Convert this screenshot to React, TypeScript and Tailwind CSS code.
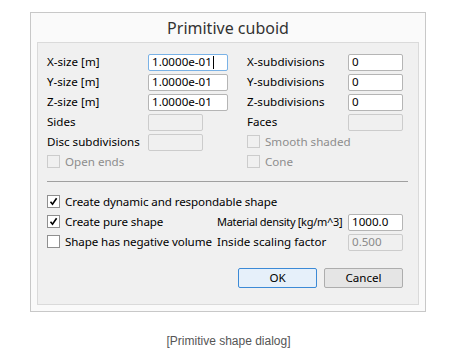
import React from 'react'

const FONT = { fontFamily: '"Noto Sans", "Open Sans", sans-serif' }

function Check({ checked, disabled }: { checked?: boolean; disabled?: boolean }) {
  return (
    <span
      className={
        'flex h-[13px] w-[13px] shrink-0 items-center justify-center border ' +
        (disabled ? 'border-[#cccccc] bg-[#f0f0f0]' : 'border-[#8f8f8f] bg-white')
      }
    >
      {checked && (
        <svg width="9" height="9" viewBox="0 0 9 9">
          <path d="M1.5 4.8 L3.5 7.2 L7.6 1.2" fill="none" stroke="#000" strokeWidth="1.6" />
        </svg>
      )}
    </span>
  )
}

function Field({
  value,
  w = 'w-[55px]',
  focused,
  disabled,
}: {
  value?: string
  w?: string
  focused?: boolean
  disabled?: boolean
}) {
  return (
    <div
      className={
        'flex h-[17px] shrink-0 items-center rounded-[2px] border px-[3px] text-[11.6px] leading-none ' +
        w +
        ' ' +
        (focused
          ? 'border-[#7ab2e6] bg-white text-black'
          : disabled
            ? 'border-[#cccccc] bg-[#f0f0f0] text-[#8a8a8a]'
            : 'border-[#b5b5b5] bg-white text-black')
      }
    >
      {value}
      {focused && <span className="ml-px h-[13px] w-px bg-black" />}
    </div>
  )
}

function Row({ children }: { children: React.ReactNode }) {
  return <div className="flex h-[20px] items-center whitespace-nowrap">{children}</div>
}

function Label({ text, w, muted }: { text: string; w: string; muted?: boolean }) {
  return <span className={'shrink-0 ' + w + ' ' + (muted ? 'text-[#8d8d8d]' : 'text-black')}>{text}</span>
}

function CheckLabel({ text, checked, disabled }: { text: string; checked?: boolean; disabled?: boolean }) {
  return (
    <div className="flex items-center gap-[5px] whitespace-nowrap">
      <Check checked={checked} disabled={disabled} />
      <span className={disabled ? 'text-[#8d8d8d]' : 'text-black'}>{text}</span>
    </div>
  )
}

export default function App() {
  return (
    <div className="h-[352px] w-[457px] bg-white pt-[12px] pl-[30px]" style={FONT}>
      {/* screenshot frame */}
      <div className="flex h-[300px] w-[396px] flex-col border border-[#c8c8c8] bg-[#fafafa] px-[6px] pb-[6px]">
        <div className="flex h-[29px] items-center justify-center pt-px text-[16px] text-[#333333]">
          Primitive cuboid
        </div>

        {/* dialog body */}
        <div className="flex-1 border border-[#dadada] bg-[#f0f0f0] pt-[9px] pl-[9px] text-[11.6px]">
          <div className="flex">
            <div className="w-[200px] shrink-0">
              <Row>
                <Label text="X-size [m]" w="w-[101px]" />
                <Field value="1.0000e-01" w="w-[80px]" focused />
              </Row>
              <Row>
                <Label text="Y-size [m]" w="w-[101px]" />
                <Field value="1.0000e-01" w="w-[80px]" />
              </Row>
              <Row>
                <Label text="Z-size [m]" w="w-[101px]" />
                <Field value="1.0000e-01" w="w-[80px]" />
              </Row>
              <Row>
                <Label text="Sides" w="w-[101px]" />
                <Field disabled />
              </Row>
              <Row>
                <Label text="Disc subdivisions" w="w-[101px]" />
                <Field disabled />
              </Row>
              <Row>
                <CheckLabel text="Open ends" disabled />
              </Row>
            </div>
            <div className="w-[160px] shrink-0">
              <Row>
                <Label text="X-subdivisions" w="w-[101px]" />
                <Field value="0" />
              </Row>
              <Row>
                <Label text="Y-subdivisions" w="w-[101px]" />
                <Field value="0" />
              </Row>
              <Row>
                <Label text="Z-subdivisions" w="w-[101px]" />
                <Field value="0" />
              </Row>
              <Row>
                <Label text="Faces" w="w-[101px]" />
                <Field disabled />
              </Row>
              <Row>
                <CheckLabel text="Smooth shaded" disabled />
              </Row>
              <Row>
                <CheckLabel text="Cone" disabled />
              </Row>
            </div>
          </div>

          <div className="mt-[9px] mb-[10px] h-px w-[361px] bg-[#a0a0a0]" />

          <div className="flex">
            <div className="w-[170px] shrink-0 tracking-[-0.1px]">
              <Row>
                <CheckLabel text="Create dynamic and respondable shape" checked />
              </Row>
              <Row>
                <CheckLabel text="Create pure shape" checked />
              </Row>
              <Row>
                <CheckLabel text="Shape has negative volume" />
              </Row>
            </div>
            <div className="w-[190px] shrink-0">
              <Row>
                <span />
              </Row>
              <Row>
                <Label text="Material density [kg/m^3]" w="w-[131px] text-[11px] tracking-[-0.3px]" />
                <Field value="1000.0" />
              </Row>
              <Row>
                <Label text="Inside scaling factor" w="w-[131px]" />
                <Field value="0.500" disabled />
              </Row>
            </div>
          </div>

          <div className="mt-[16px] flex gap-[7px] pl-[191px]">
            <button className="h-[20px] w-[79px] rounded-[2px] border border-[#3c8ad6] bg-[#e6f0fa] text-[11.6px] text-black">
              OK
            </button>
            <button className="h-[20px] w-[79px] rounded-[2px] border border-[#adadad] bg-[#e5e5e5] text-[11.6px] text-black">
              Cancel
            </button>
          </div>
        </div>
      </div>

      <div
        className="mt-[20px] ml-[-30px] w-[457px] text-center text-[12px] text-[#555555]"
        style={{ fontFamily: '"Liberation Sans", Arial, sans-serif' }}
      >
        [Primitive shape dialog]
      </div>
    </div>
  )
}
